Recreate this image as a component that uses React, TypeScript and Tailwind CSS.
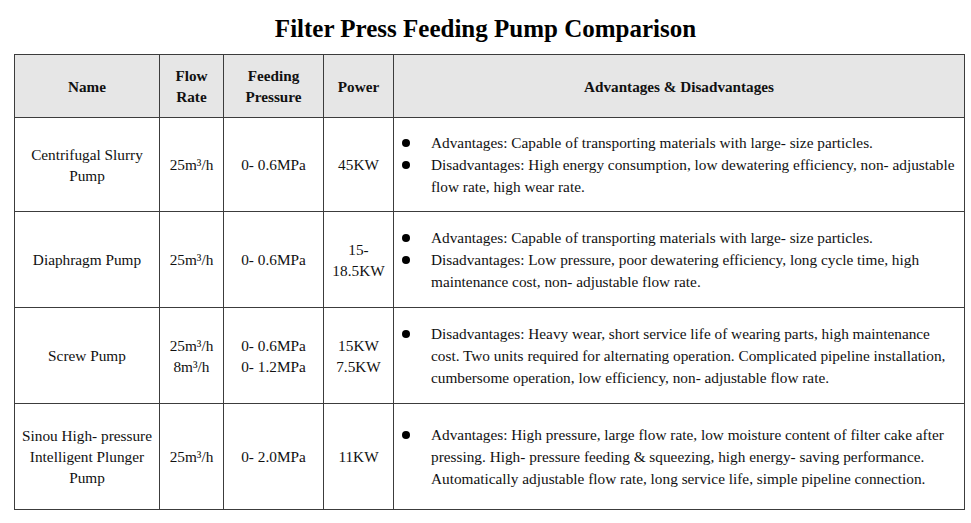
import React from "react";

const serif = { fontFamily: '"Liberation Serif", "Times New Roman", serif' };

type Row = {
  name: string[];
  flow: string[];
  pressure: string[];
  power: string[];
  bullets: string[];
  h: string;
};

const rows: Row[] = [
  {
    name: ["Centrifugal Slurry", "Pump"],
    flow: ["25m³/h"],
    pressure: ["0- 0.6MPa"],
    power: ["45KW"],
    bullets: [
      "Advantages: Capable of transporting materials with large- size particles.",
      "Disadvantages: High energy consumption, low dewatering efficiency, non- adjustable flow rate, high wear rate.",
    ],
    h: "h-[94px]",
  },
  {
    name: ["Diaphragm Pump"],
    flow: ["25m³/h"],
    pressure: ["0- 0.6MPa"],
    power: ["15-", "18.5KW"],
    bullets: [
      "Advantages: Capable of transporting materials with large- size particles.",
      "Disadvantages: Low pressure, poor dewatering efficiency, long cycle time, high maintenance cost, non- adjustable flow rate.",
    ],
    h: "h-[96px]",
  },
  {
    name: ["Screw Pump"],
    flow: ["25m³/h", "8m³/h"],
    pressure: ["0- 0.6MPa", "0- 1.2MPa"],
    power: ["15KW", "7.5KW"],
    bullets: [
      "Disadvantages: Heavy wear, short service life of wearing parts, high maintenance cost. Two units required for alternating operation. Complicated pipeline installation, cumbersome operation, low efficiency, non- adjustable flow rate.",
    ],
    h: "h-[96px]",
  },
  {
    name: ["Sinou High- pressure", "Intelligent Plunger", "Pump"],
    flow: ["25m³/h"],
    pressure: ["0- 2.0MPa"],
    power: ["11KW"],
    bullets: [
      "Advantages: High pressure, large flow rate, low moisture content of filter cake after pressing. High- pressure feeding & squeezing, high energy- saving performance. Automatically adjustable flow rate, long service life, simple pipeline connection.",
    ],
    h: "h-[106px]",
  },
];

const nb = (s: string) => s.replace(/- /g, "-\u00A0");

function Lines({ lines }: { lines: string[] }) {
  return (
    <>
      {lines.map((l, i) => (
        <div key={i}>{nb(l)}</div>
      ))}
    </>
  );
}

export default function App() {
  return (
    <div className="w-[971px] h-[523px] bg-white text-[#111]" style={serif}>
      <h1 className="pt-[14px] h-[54px] text-center text-[25px] leading-[30px] font-bold text-black">
        Filter Press Feeding Pump Comparison
      </h1>
      <table className="ml-[14px] w-[950px] border-collapse table-fixed text-[15.3px] leading-[21px]">
        <colgroup>
          <col className="w-[145px]" />
          <col className="w-[64px]" />
          <col className="w-[100px]" />
          <col className="w-[70px]" />
          <col className="w-[571px]" />
        </colgroup>
        <thead>
          <tr className="h-[63px] bg-[#e6e6e6] text-[15.2px] leading-[21px] font-bold">
            <th className="border-[1.5px] border-[#3c3c3c] text-center align-middle">Name</th>
            <th className="border-[1.5px] border-[#3c3c3c] text-center align-middle">
              Flow
              <br />
              Rate
            </th>
            <th className="border-[1.5px] border-[#3c3c3c] text-center align-middle">
              Feeding
              <br />
              Pressure
            </th>
            <th className="border-[1.5px] border-[#3c3c3c] text-center align-middle">Power</th>
            <th className="border-[1.5px] border-[#3c3c3c] text-center align-middle">
              Advantages &amp; Disadvantages
            </th>
          </tr>
        </thead>
        <tbody>
          {rows.map((r, i) => (
            <tr key={i} className={r.h}>
              <td className="border-[1.5px] border-[#3c3c3c] text-center align-middle">
                <Lines lines={r.name} />
              </td>
              <td className="border-[1.5px] border-[#3c3c3c] text-center align-middle">
                <Lines lines={r.flow} />
              </td>
              <td className="border-[1.5px] border-[#3c3c3c] text-center align-middle">
                <Lines lines={r.pressure} />
              </td>
              <td className="border-[1.5px] border-[#3c3c3c] text-center align-middle">
                <Lines lines={r.power} />
              </td>
              <td className="border-[1.5px] border-[#3c3c3c] align-middle pl-[8px] pr-[2px]">
                <div className="flex flex-col">
                  {r.bullets.map((b, j) => (
                    <div key={j} className="flex">
                      <div className="w-[29px] shrink-0 pt-[7px]">
                        <div className="w-[8px] h-[8px] rounded-full bg-black" />
                      </div>
                      <div className="leading-[22px]">{nb(b)}</div>
                    </div>
                  ))}
                </div>
              </td>
            </tr>
          ))}
        </tbody>
      </table>
    </div>
  );
}
